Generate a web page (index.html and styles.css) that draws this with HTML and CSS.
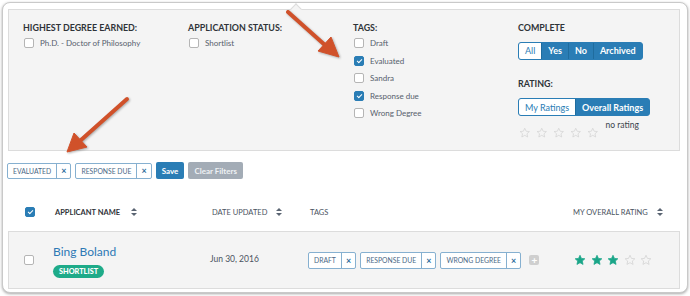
FILE: index.html
```html
<!DOCTYPE html>
<html lang="en">
<head>
  <meta charset="UTF-8">
  <title>Applicants</title>
  <link rel="stylesheet" href="styles.css">
</head>
<body>
  <div class="card">
    <div class="filters">
      <div class="col">
        <h3>Highest Degree Earned:</h3>
        <label class="check"><span class="box"></span>Ph.D. - Doctor of Philosophy</label>
      </div>
      <div class="col">
        <h3>Application Status:</h3>
        <label class="check"><span class="box"></span>Shortlist</label>
      </div>
      <div class="col tags">
        <h3>Tags:</h3>
        <label class="check"><span class="box"></span>Draft</label>
        <label class="check"><span class="box on"></span>Evaluated</label>
        <label class="check"><span class="box"></span>Sandra</label>
        <label class="check"><span class="box on"></span>Response due</label>
        <label class="check"><span class="box"></span>Wrong Degree</label>
      </div>
      <div class="col">
        <h3>Complete</h3>
        <div class="seg">
          <span class="active">All</span><span>Yes</span><span>No</span><span>Archived</span>
        </div>
        <h3 class="rating-title">Rating:</h3>
        <div class="seg">
          <span class="active">My Ratings</span><span>Overall Ratings</span>
        </div>
        <div class="no-rating">
          <div class="stars empty">
            <svg viewBox="0 0 24 24"><path d="M12 2.5l2.9 6.3 6.8.7-5.1 4.6 1.5 6.8L12 17.4l-6.1 3.5 1.5-6.8-5.1-4.6 6.8-.7z"/></svg>
            <svg viewBox="0 0 24 24"><path d="M12 2.5l2.9 6.3 6.8.7-5.1 4.6 1.5 6.8L12 17.4l-6.1 3.5 1.5-6.8-5.1-4.6 6.8-.7z"/></svg>
            <svg viewBox="0 0 24 24"><path d="M12 2.5l2.9 6.3 6.8.7-5.1 4.6 1.5 6.8L12 17.4l-6.1 3.5 1.5-6.8-5.1-4.6 6.8-.7z"/></svg>
            <svg viewBox="0 0 24 24"><path d="M12 2.5l2.9 6.3 6.8.7-5.1 4.6 1.5 6.8L12 17.4l-6.1 3.5 1.5-6.8-5.1-4.6 6.8-.7z"/></svg>
            <svg viewBox="0 0 24 24"><path d="M12 2.5l2.9 6.3 6.8.7-5.1 4.6 1.5 6.8L12 17.4l-6.1 3.5 1.5-6.8-5.1-4.6 6.8-.7z"/></svg>
          </div>
          <span>no rating</span>
        </div>
      </div>
    </div>

    <div class="active-filters">
      <span class="chip"><span class="chip-text">Evaluated</span><span class="chip-x">&times;</span></span>
      <span class="chip"><span class="chip-text">Response due</span><span class="chip-x">&times;</span></span>
      <button class="btn btn-save">Save</button>
      <button class="btn btn-clear">Clear Filters</button>
    </div>

    <div class="grid head">
      <span class="box on"></span>
      <span class="th strong">Applicant Name <i class="sort"></i></span>
      <span class="th">Date Updated <i class="sort"></i></span>
      <span class="th">Tags</span>
      <span class="th">My Overall Rating <i class="sort"></i></span>
    </div>

    <div class="grid row">
      <span class="box"></span>
      <div class="name">
        <a href="#">Bing Boland</a>
        <span class="badge">Shortlist</span>
      </div>
      <span class="date">Jun 30, 2016</span>
      <div class="row-tags">
        <span class="chip"><span class="chip-text">Draft</span><span class="chip-x">&times;</span></span>
        <span class="chip"><span class="chip-text">Response due</span><span class="chip-x">&times;</span></span>
        <span class="chip"><span class="chip-text">Wrong Degree</span><span class="chip-x">&times;</span></span>
        <span class="plus">+</span>
      </div>
      <div class="stars filled">
        <svg class="on" viewBox="0 0 24 24"><path d="M12 2.5l2.9 6.3 6.8.7-5.1 4.6 1.5 6.8L12 17.4l-6.1 3.5 1.5-6.8-5.1-4.6 6.8-.7z"/></svg>
        <svg class="on" viewBox="0 0 24 24"><path d="M12 2.5l2.9 6.3 6.8.7-5.1 4.6 1.5 6.8L12 17.4l-6.1 3.5 1.5-6.8-5.1-4.6 6.8-.7z"/></svg>
        <svg class="on" viewBox="0 0 24 24"><path d="M12 2.5l2.9 6.3 6.8.7-5.1 4.6 1.5 6.8L12 17.4l-6.1 3.5 1.5-6.8-5.1-4.6 6.8-.7z"/></svg>
        <svg viewBox="0 0 24 24"><path d="M12 2.5l2.9 6.3 6.8.7-5.1 4.6 1.5 6.8L12 17.4l-6.1 3.5 1.5-6.8-5.1-4.6 6.8-.7z"/></svg>
        <svg viewBox="0 0 24 24"><path d="M12 2.5l2.9 6.3 6.8.7-5.1 4.6 1.5 6.8L12 17.4l-6.1 3.5 1.5-6.8-5.1-4.6 6.8-.7z"/></svg>
      </div>
    </div>

    <!-- annotation arrows drawn over the screenshot -->
    <svg class="arrows" viewBox="0 0 690 296">
      <g fill="#d0512a" stroke="#d0512a">
        <line x1="288" y1="12" x2="326" y2="46" stroke-width="4" stroke-linecap="round"/>
        <polygon points="339,57 318,51 331,37" stroke-width="1" stroke-linejoin="round"/>
        <line x1="127" y1="99" x2="81" y2="140" stroke-width="4" stroke-linecap="round"/>
        <polygon points="67,152 74,133 87,147" stroke-width="1" stroke-linejoin="round"/>
      </g>
    </svg>
  </div>
</body>
</html>
```

FILE: styles.css
```css
*, *::before, *::after { box-sizing: border-box; }
html, body {
  margin: 0; padding: 0;
  width: 690px; height: 296px;
  overflow: hidden;
  background: #fff;
  font-family: Lato, 'Open Sans', sans-serif;
  color: #333;
}
.card {
  position: relative;
  margin: 2px;
  height: 291px;
  padding: 6px 7px 0 5px;
  background: #fff;
  border: 1px solid #c9c9c9;
  border-radius: 8px;
  box-shadow: 0 1px 3px rgba(0, 0, 0, 0.35);
}

/* filter panel */
.filters {
  position: relative;
  display: grid;
  grid-template-columns: 165px 165px 165px auto;
  height: 142px;
  padding: 12px 14px;
  background: #f4f4f4;
  border: 1px solid #dcdcdc;
}
.filters::before {
  content: '';
  position: absolute;
  top: -5px; left: 283px;
  width: 8px; height: 8px;
  background: #f4f4f4;
  border-left: 1px solid #dcdcdc;
  border-top: 1px solid #dcdcdc;
  transform: rotate(45deg);
}
h3 {
  margin: 0 0 5px;
  font-size: 8.9px;
  font-weight: 700;
  text-transform: uppercase;
  color: #2f3338;
  line-height: 11px;
}
.check {
  display: flex;
  align-items: center;
  height: 10px;
  font-size: 8px;
  color: #56606c;
}
.tags .check { margin-bottom: 7.5px; }
.box {
  display: inline-block;
  flex: none;
  width: 10px; height: 10px;
  margin: 0 6px 0 1px;
  background: #fff;
  border: 1px solid #b5b5b5;
  border-radius: 2px;
  position: relative;
}
.box.on {
  background: #2a7db5;
  border-color: #2a7db5;
}
.box.on::after {
  content: '';
  position: absolute;
  left: 2.5px; top: 1px;
  width: 3px; height: 5px;
  border: solid #fff;
  border-width: 0 1.5px 1.5px 0;
  transform: rotate(45deg);
}

/* segmented buttons */
.seg {
  display: inline-flex;
  height: 18px;
  border: 1px solid #2a7db5;
  border-radius: 3px;
  overflow: hidden;
  background: #2a7db5;
}
.seg span {
  display: flex;
  align-items: center;
  padding: 0 6px;
  font-size: 9px;
  font-weight: 700;
  color: #fff;
  border-left: 1px solid #1f6c9e;
}
.seg span:first-child { border-left: none; }
.seg .active {
  background: #fff;
  color: #2a7db5;
  font-weight: 400;
}
.rating-title { margin-top: 18px; margin-bottom: 6px; }
.no-rating {
  display: flex;
  align-items: flex-start;
  margin-top: 4px;
  font-size: 8.5px;
  color: #3b434c;
}
.no-rating span { margin-left: 7px; margin-top: 0; }
.stars {
  display: flex;
  gap: 5.5px;
}
.stars svg {
  width: 11.5px; height: 11.5px;
  fill: none;
  stroke: #d2d2d2;
  stroke-width: 1.5;
}
.stars.empty { margin-top: 7px; margin-left: 1px; }
.stars.filled svg { width: 12px; height: 12px; }
.stars svg.on {
  fill: #1aa588;
  stroke: #1aa588;
}

/* chips */
.active-filters {
  display: flex;
  align-items: center;
  gap: 4px;
  margin-top: 11px;
  margin-left: -1px;
  height: 17px;
}
.chip {
  display: inline-flex;
  align-items: stretch;
  height: 16px;
  background: #fff;
  border: 1px solid #86b0d0;
  border-radius: 2px;
  font-size: 6.8px;
  text-transform: uppercase;
  color: #4b6886;
}
.chip-text {
  display: flex;
  align-items: center;
  padding: 0 5px;
}
.chip-x {
  display: flex;
  align-items: center;
  padding: 0 4px;
  border-left: 1px solid #86b0d0;
  font-weight: 700;
  font-size: 9px;
  color: #2a6a9a;
}
.btn {
  height: 17px;
  padding: 0 6px;
  border: none;
  border-radius: 2px;
  font-family: inherit;
  font-size: 8px;
  font-weight: 700;
  color: #fff;
}
.btn-save { background: #2a7db5; margin-left: 0; }
.btn-clear { background: #a3acb6; color: #eef1f4; }

/* table */
.grid {
  display: grid;
  grid-template-columns: 30px 157px 98px 263px auto;
  align-items: center;
}
.head {
  height: 24px;
  margin-top: 21px;
  padding-left: 17px;
}
.head .box { margin: 0; }
.th {
  display: flex;
  align-items: center;
  font-size: 7.5px;
  text-transform: uppercase;
  color: #4a5360;
}
.th.strong { font-weight: 700; color: #2f3338; }
.sort {
  display: inline-block;
  position: relative;
  width: 6px; height: 8px;
  margin-left: 9px;
}
.sort::before, .sort::after {
  content: '';
  position: absolute;
  left: 0;
  border-left: 3px solid transparent;
  border-right: 3px solid transparent;
}
.sort::before { top: 0; border-bottom: 3px solid #5a6472; }
.sort::after { bottom: 0; border-top: 3px solid #5a6472; }
.th.strong .sort { margin-left: 11px; }

.row {
  height: 58px;
  margin-top: 7px;
  padding-left: 14px;
  background: #f4f4f4;
  border: 1px solid #dcdcdc;
}
.row .box { margin: 0 0 0 1px; }
.name {
  display: flex;
  flex-direction: column;
  align-items: flex-start;
  gap: 6px;
  padding-top: 1px;
}
.name a {
  font-size: 12px;
  color: #2d78b4;
  text-decoration: none;
  line-height: 15px;
}
.badge {
  display: inline-flex;
  align-items: center;
  height: 13px;
  padding: 0 6px;
  background: #1eab89;
  border-radius: 7px;
  font-size: 7.3px;
  font-weight: 900;
  text-transform: uppercase;
  color: #fff;
}
.date {
  font-size: 8.5px;
  color: #4a5360;
  padding-bottom: 3px;
}
.row-tags {
  display: flex;
  align-items: center;
  gap: 4px;
}
.row-tags .chip { height: 17px; }
.plus {
  display: flex;
  align-items: center;
  justify-content: center;
  width: 10px; height: 10px;
  margin-left: 4px;
  background: #cfcfcf;
  border-radius: 2px;
  font-size: 10px;
  font-weight: 700;
  line-height: 1;
  color: #fff;
}
.row .stars { gap: 4.5px; margin-left: 3px; }

.arrows {
  position: absolute;
  left: -3px; top: -3px;
  width: 690px; height: 296px;
  pointer-events: none;
  filter: drop-shadow(1px 1px 1px rgba(0, 0, 0, 0.3));
}
```
